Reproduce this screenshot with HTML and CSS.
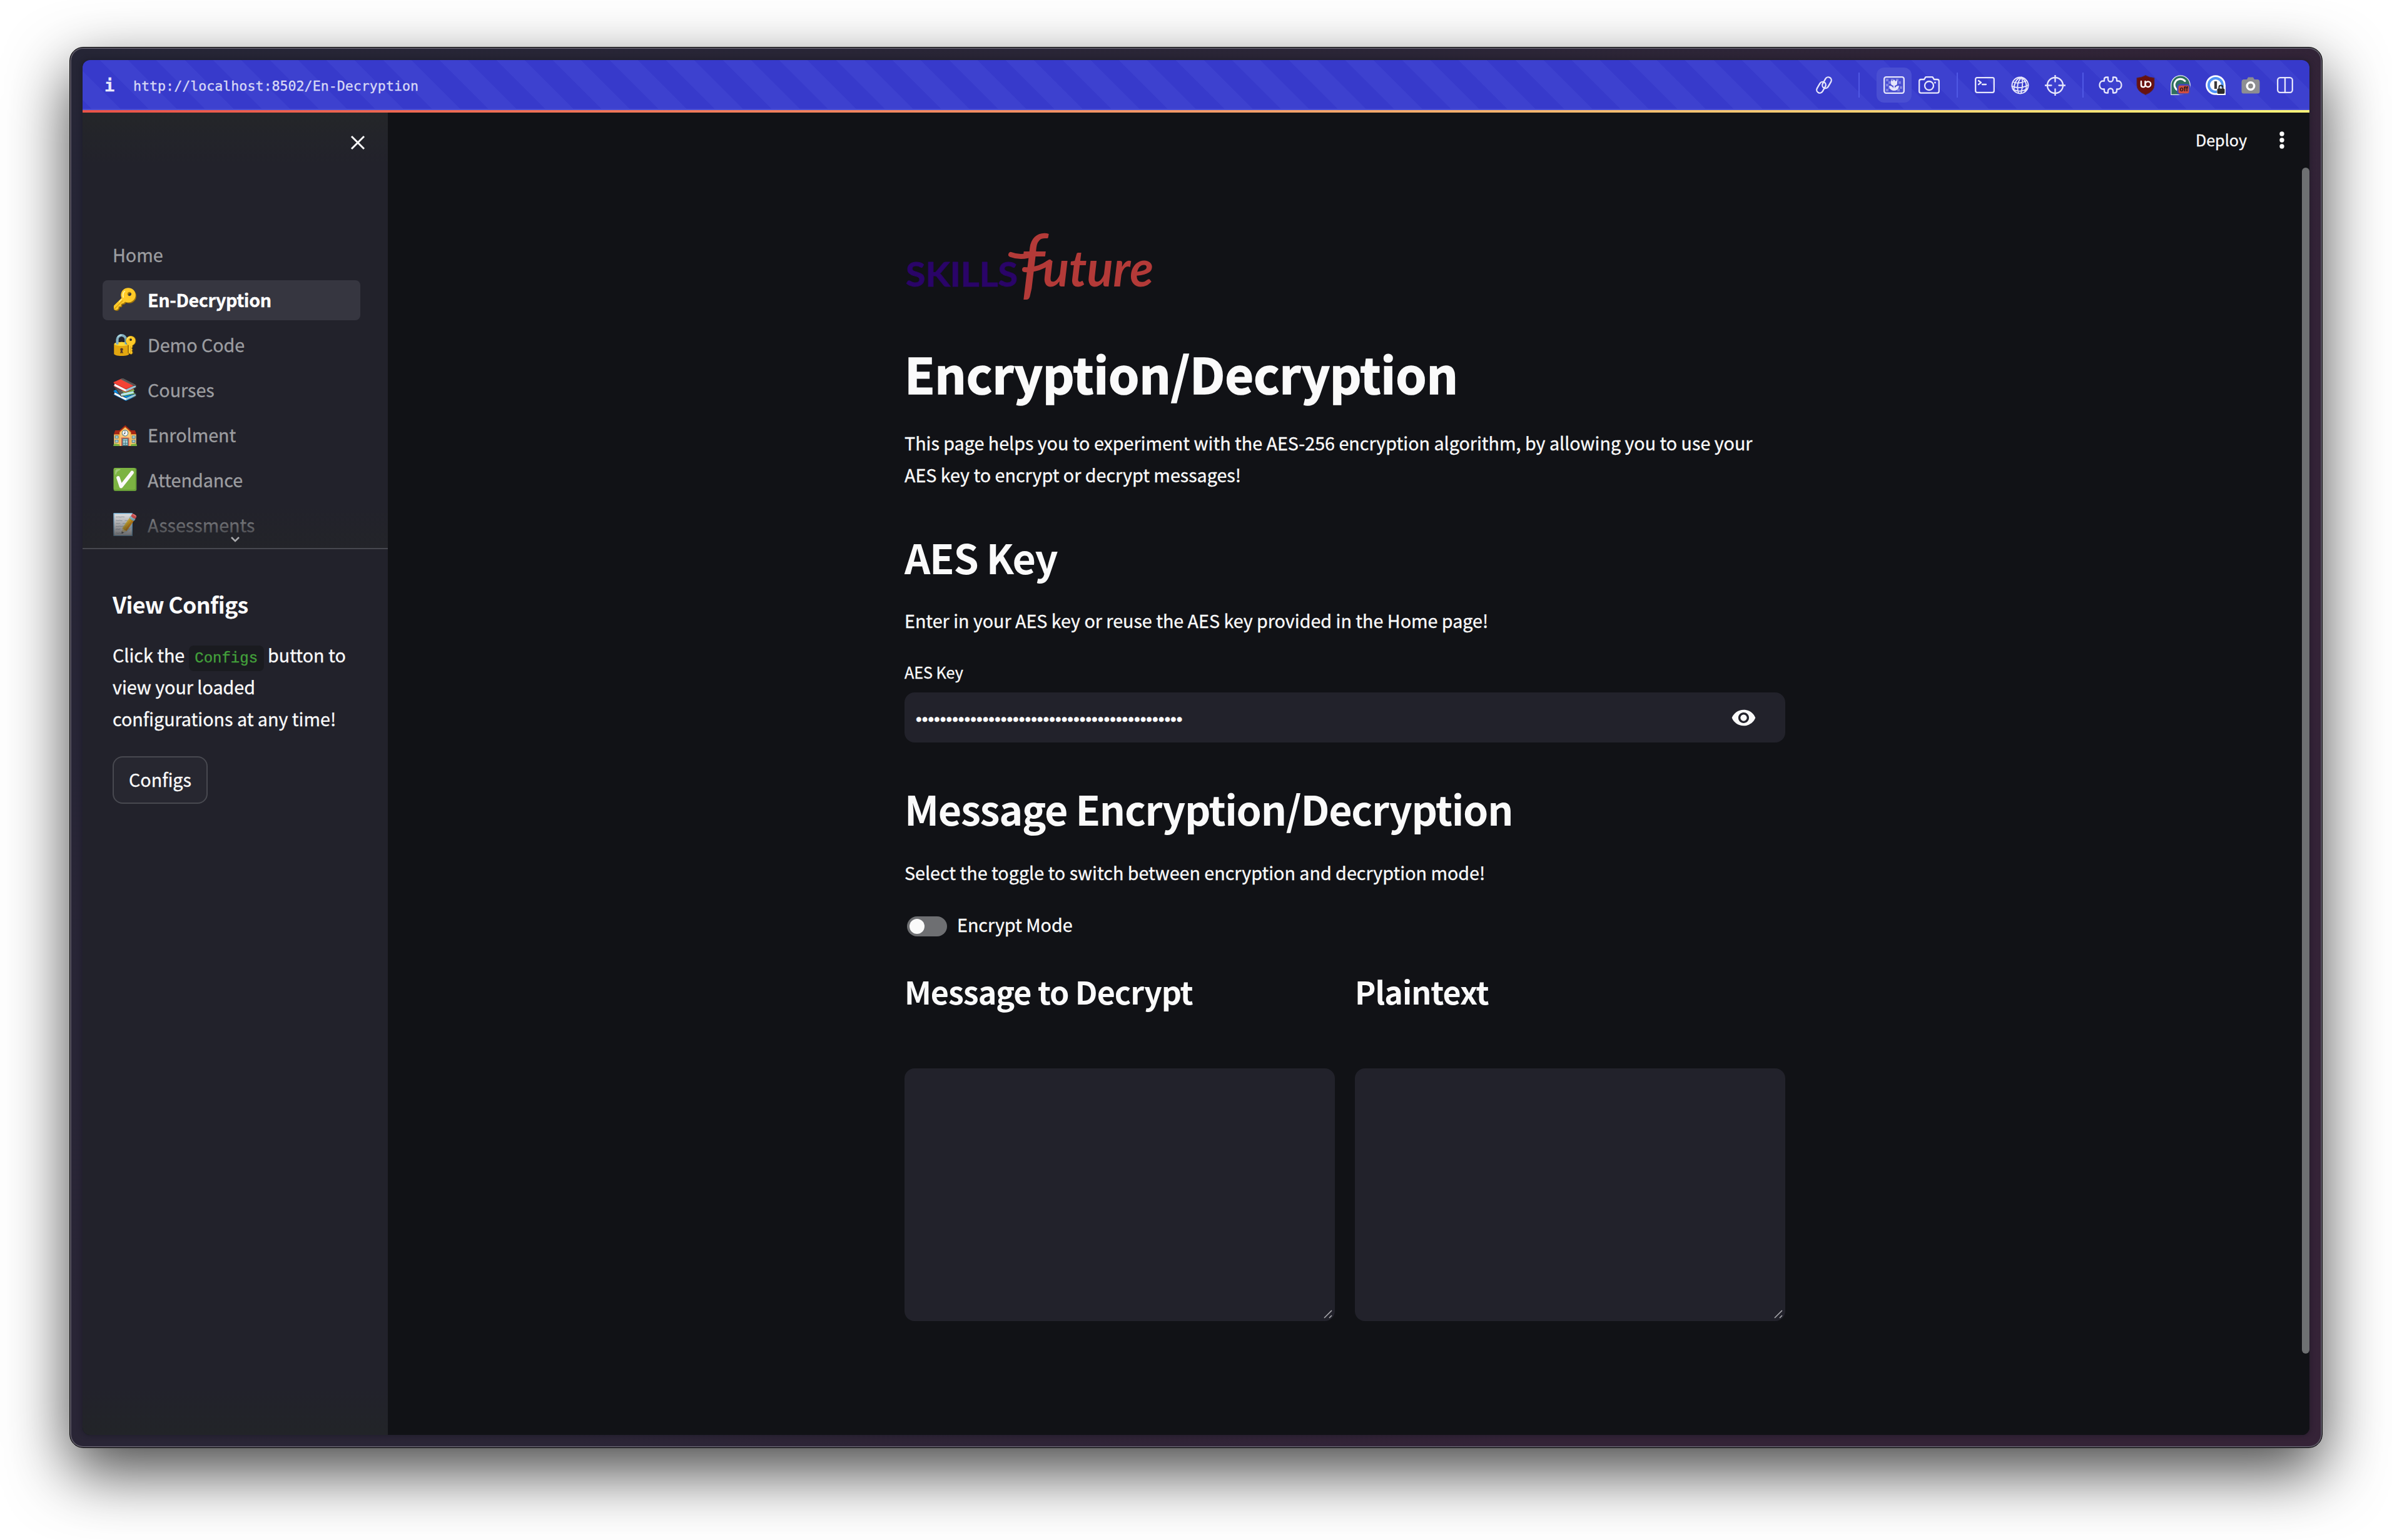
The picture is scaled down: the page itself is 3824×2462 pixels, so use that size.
FILE: index.html
```html
<!DOCTYPE html>
<html lang="en">
<head>
<meta charset="utf-8">
<title>En-Decryption</title>
<link rel="stylesheet" href="styles.css">
</head>
<body>
<div class="window">
  <div class="viewport">
    <header class="toolbar">
      <span class="site-info">i</span>
      <span class="url">http://localhost:8502/En-Decryption</span>
      <div class="tools">
        <svg class="link" width="30" height="32" viewBox="0 0 30 32"><g transform="rotate(30 15 16)"><rect x="12" y="1" width="10" height="19" rx="5"/><rect x="8" y="12" width="10" height="19" rx="5"/></g></svg>
        <i class="sep"></i>
        <span class="tool-active"><svg width="34" height="28" viewBox="0 0 34 28"><g class="checks"><path d="M4 4h4v4H4zM12 4h4v4h-4zM20 4h4v4h-4zM8 8h4v4H8zM24 8h4v4h-4zM4 12h4v4H4zM8 16h4v4H8zM26 16h4v4h-4zM4 20h4v4H4zM22 20h4v4h-4z"/></g><rect x="1.2" y="1.2" width="31.6" height="25.6" rx="3"/><path class="solid" d="M12 6l2.5 2L17 5l2.500 3L22 6v5a5 4 0 0 1-4 4v4q2-4 7-4-1 8-8 8t-8-8q5 0 7 4v-4a5 4 0 0 1-4-4z"/></svg></span>
        <svg class="camera" width="34" height="28" viewBox="0 0 34 28"><path d="M4 5h5l2.500-3.800h11L25 5h5q2.800 0 2.800 2.800v16q0 2.800-2.800 2.800H4q-2.800 0-2.800-2.800v-16Q1.200 5 4 5z"/><circle cx="17" cy="15" r="7"/><circle class="solid" cx="26.500" cy="10" r="1.500"/></svg>
        <i class="sep sep-b"></i>
        <svg class="terminal" width="32" height="26" viewBox="0 0 32 26"><rect x="1.200" y="1.200" width="29.600" height="23.600" rx="2.500"/><path d="M6 6l4 3-4 3M12 12h6"/></svg>
        <svg class="globe" width="29" height="29" viewBox="0 0 29 29"><circle cx="14.500" cy="14.500" r="13"/><path d="M17 1.500Q7 11 12 27M17 1.500Q20 13 16 27M17 1.500Q29 12 22 25M17 1.500Q5 4 4.500 22M3 9Q12 13 25 7M1.500 16Q14 21 27.500 14M5 22Q16 26 26 20"/></svg>
        <svg class="target" width="33" height="33" viewBox="0 0 33 33"><circle cx="16.500" cy="16.500" r="12.500"/><path d="M16.500 0v10.500M16.500 22.500V33M0 16.500h10.500M22.500 16.500H33"/></svg>
        <i class="sep sep-c"></i>
        <svg class="puzzle" width="38" height="28" viewBox="0 0 38 28"><path d="M9 7.500V5q0-3.500 3.500-3.500H15v3a4 4 0 0 0 8 0v-3h2.500Q29 1.500 29 5v2.500h2.500a5 6.500 0 0 1 0 13H29V23q0 3.500-3.500 3.500H23v-3a4 4 0 0 0-8 0v3h-2.500Q9 26.500 9 23v-2.500H6.500a5 6.500 0 0 1 0-13z"/></svg>
        <svg class="ublock" width="30" height="32" viewBox="0 0 30 32"><path d="M15 .5Q21 4 29 4.500V16q0 10-14 15.500Q1 26 1 16V4.500Q9 4 15 .5z" fill="#68120f" stroke="#4c2a55" stroke-width="1"/><path d="M8 10v6q0 3.200 3.300 3.200T14.500 16v-6" fill="none" stroke="#fff" stroke-width="2.400"/><circle cx="19" cy="14.700" r="4.300" fill="none" stroke="#fff" stroke-width="2.400"/></svg>
        <svg class="grammarly" width="32" height="32" viewBox="0 0 32 32"><path d="M.8 31.300V16A15.200 15.200 0 1 1 16 31.300z" fill="#2f6f5f" stroke="#e8eff0" stroke-width="1.300"/><path d="M23 9.500A9.500 9.500 0 1 0 14 25" fill="none" stroke="#fff" stroke-width="3"/><rect x="11.500" y="15.500" width="19" height="15" rx="3.500" fill="#cf4f43" stroke="#4146bf"/><text x="21" y="26.300" text-anchor="middle" class="off">off</text></svg>
        <svg class="onepass" width="32" height="32" viewBox="0 0 32 32"><circle cx="16" cy="16" r="15.800" fill="#fff"/><path d="M16 16h16v16H18z" fill="#fff"/><circle cx="16" cy="16" r="11" fill="none" stroke="#4f93f5" stroke-width="4"/><path d="M18 20h14v12H18z" fill="#fff"/><rect x="14" y="10" width="4.200" height="12" fill="#3a3a3a"/><path d="M21.500 22v-2.500a3 3 0 0 1 6 0V22" fill="none" stroke="#2b2b2b" stroke-width="2"/><rect x="18.500" y="21.500" width="12" height="8.500" rx="2" fill="#2b2b2b"/></svg>
        <svg class="graycam" width="30" height="27" viewBox="0 0 30 27"><path d="M3 4h6l2-3.500h8L21 4h6q2.500 1 2.500 4v15.500q0 3-3 3h-23q-3 0-3-3V8Q.5 5 3 4z" fill="#8d8e92"/><circle cx="15" cy="14.500" r="5.700" fill="#8a8a8a" stroke="#fff" stroke-width="3.600"/></svg>
        <svg class="split" width="26" height="26" viewBox="0 0 26 26"><rect x="1.200" y="1.200" width="23.600" height="23.600" rx="4"/><path d="M13 1v24"/></svg>
      </div>
    </header>
    <div class="accent"></div>
    <div class="app">
      <aside class="sidebar">
        <div class="sidebar-top"><svg class="close" width="26" height="26" viewBox="0 0 26 26"><path d="M3 3l20 20M23 3L3 23"/></svg></div>
        <nav class="nav">
          <a class="item">Home</a>
          <a class="item active"><span class="emoji">🔑</span>En-Decryption</a>
          <a class="item"><span class="emoji">🔐</span>Demo Code</a>
          <a class="item"><span class="emoji">📚</span>Courses</a>
          <a class="item"><span class="emoji">🏫</span>Enrolment</a>
          <a class="item"><span class="emoji">✅</span>Attendance</a>
          <a class="item"><span class="emoji">📝</span>Assessments</a>
          <div class="fade"><svg width="18" height="12" viewBox="0 0 18 12"><path d="M3 2l6 6 6-6"/></svg></div>
        </nav>
        <section class="configs">
          <h4>View Configs</h4>
          <p>Click the <code>Configs</code> button to<br>view your loaded<br>configurations at any time!</p>
          <button>Configs</button>
        </section>
      </aside>
      <main class="main">
        <div class="app-header">
          <span>Deploy</span>
          <svg width="10" height="30" viewBox="0 0 10 30"><circle cx="5" cy="5" r="3.700"/><circle cx="5" cy="15" r="3.700"/><circle cx="5" cy="25" r="3.700"/></svg>
        </div>
        <div class="content">
          <svg class="logo" width="420" height="130" viewBox="0 0 420 130">
            <text class="skills" x="8" y="103" textLength="179" lengthAdjust="spacingAndGlyphs">SKILLS</text>
            <text class="future" x="191" y="108"><tspan class="tall">f</tspan><tspan x="227" y="103" textLength="177" lengthAdjust="spacingAndGlyphs">uture</tspan></text>
            <path d="M176 52q18 7 38-2M198 76q20 2 40-12"/>
          </svg>
          <h1>Encryption/Decryption</h1>
          <p class="intro">This page helps you to experiment with the AES-256 encryption algorithm, by allowing you to use your<br>AES key to encrypt or decrypt messages!</p>
          <h2 class="key-title">AES Key</h2>
          <p class="key-text">Enter in your AES key or reuse the AES key provided in the Home page!</p>
          <label class="key-label">AES Key</label>
          <div class="password">
            <span class="dots">••••••••••••••••••••••••••••••••••••••••••••</span>
            <svg width="41" height="41" viewBox="0 0 24 24"><path d="M12 4.500C7 4.500 2.730 7.610 1 12c1.730 4.390 6 7.500 11 7.500s9.270-3.110 11-7.500c-1.730-4.390-6-7.500-11-7.500zM12 17c-2.760 0-5-2.240-5-5s2.240-5 5-5 5 2.240 5 5-2.240 5-5 5zm0-8c-1.660 0-3 1.340-3 3s1.340 3 3 3 3-1.340 3-3-1.340-3-3-3z"/></svg>
          </div>
          <h2 class="msg-title">Message Encryption/Decryption</h2>
          <p class="msg-text">Select the toggle to switch between encryption and decryption mode!</p>
          <div class="toggle-row"><span class="toggle"><i></i></span><span>Encrypt Mode</span></div>
          <div class="columns">
            <section><h3>Message to Decrypt</h3><div class="area"><svg width="16" height="16" viewBox="0 0 16 16"><path d="M2 14L14 2M10 14l4-4"/></svg></div></section>
            <section><h3>Plaintext</h3><div class="area"><svg width="16" height="16" viewBox="0 0 16 16"><path d="M2 14L14 2M10 14l4-4"/></svg></div></section>
          </div>
        </div>
        <div class="scrollbar"></div>
      </main>
    </div>
  </div>
</div>
</body>
</html>
```
FILE: styles.css
```css
* { box-sizing: border-box; margin: 0; padding: 0; }
html, body { width: 3824px; height: 2462px; overflow: hidden; background: #fff; }
body {
  padding: 75px 0 0 111px;
  font: 400 28.67px/51.2px "Noto Sans CJK SC", "Noto Sans", sans-serif;
  color: #fafafa;
  -webkit-text-stroke: 0.35px currentColor;
}
svg { display: block; flex: none; }
svg text { -webkit-text-stroke: 0; }

.window {
  width: 3602px; height: 2240px;
  padding: 20px;
  border: 1px solid #000;
  border-radius: 22px;
  background: linear-gradient(125deg, #252535 0%, #2b2536 45%, #332337 75%, #352337 100%);
  box-shadow: inset 0 0 0 2px #5b5764, 0 38px 100px rgba(0, 0, 0, .72);
}
.viewport {
  display: flex; flex-direction: column;
  width: 3560px; height: 2198px;
  border-radius: 12px; overflow: hidden;
  background: #111216;
  box-shadow: 0 0 8px rgba(20, 22, 30, .6);
}

.toolbar {
  display: flex; align-items: center;
  flex: none; height: 80px;
  padding: 0 26px 0 35px;
  background: repeating-linear-gradient(45deg, #373acb 0 12px, #3d41cf 12px 44px, #373acb 44px 64px);
  box-shadow: inset 0 -2px 0 #4a4ed4;
}
.site-info { width: 16px; padding-top: 2px; font: 700 27px/40px "DejaVu Sans Mono", monospace; color: #e9e9fb; }
.url { margin-left: 30px; padding-top: 3px; font: 400 21.65px/40px "DejaVu Sans Mono", monospace; color: #d7d8f5; }
.tools { display: flex; align-items: center; margin-left: auto; fill: none; stroke: #e6e6fb; stroke-width: 2.300; stroke-linecap: round; stroke-linejoin: round; }
.tools .solid { fill: #e6e6fb; stroke: none; }
.checks { fill: #8082e0; stroke: none; }
.sep { width: 2px; height: 40px; margin: 0 27px 0 40px; background: #4f58e4; }
.tool-active { display: flex; align-items: center; justify-content: center; width: 56px; height: 56px; border-radius: 12px; background: #494ed2; }
.camera { margin-left: 11px; }
.sep-b { margin-left: 27px; }
.globe { margin-left: 26px; stroke-width: 1.900; }
.target { margin-left: 25px; }
.sep-c { margin-left: 27px; margin-right: 24px; }
.ublock { margin-left: 22px; }
.grammarly, .ublock, .onepass, .graycam { stroke: none; }
.grammarly { margin-left: 25px; }
.onepass { margin-left: 24px; }
.graycam { margin-left: 25px; }
.split { margin-left: 27px; }
.off { font: 700 10.500px "Liberation Sans", sans-serif; fill: #1f1413; }

.accent { flex: none; height: 4px; background: linear-gradient(90deg, #ea5449, #f59a68 50%, #f8c873 75%, #fff578); }

.app { display: flex; flex: 1; }
.sidebar { width: 488px; background: linear-gradient(#242629, #22222b 80px, #22222b 2040px, #222428); }
.sidebar-top { display: flex; justify-content: flex-end; height: 196px; padding: 35px 35px 0 0; }
.close { fill: none; stroke: #fafafa; stroke-width: 3; }
.nav { position: relative; height: 502px; padding: 0 44px 0 32px; border-bottom: 2px solid #47484f; overflow: hidden; }
.item {
  display: flex; align-items: center;
  height: 64px; margin-bottom: 8px; padding: 0 16px 3px;
  border-radius: 8px;
  color: #9c9da0;
}
.item.active { background: #363640; color: #fff; font-weight: 700; letter-spacing: -.4px; }
.emoji { display: flex; justify-content: center; width: 40px; margin-right: 16px; font: 33.5px/40px "Noto Color Emoji", sans-serif; letter-spacing: 0; -webkit-text-stroke: 0; }
.fade {
  position: absolute; left: 0; right: 0; bottom: 0;
  display: flex; justify-content: center; align-items: flex-end;
  height: 64px; padding-bottom: 7px;
  background: linear-gradient(rgba(35, 36, 41, 0), #232429);
}
.fade svg { fill: none; stroke: #a9aaad; stroke-width: 2.600; }
.configs { padding: 63px 0 0 48px; }
h4 { font-size: 35.840px; line-height: 48px; letter-spacing: -.7px; }
.configs p { margin-top: 32px; }
code {
  padding: 7px 9.600px; border-radius: 8px;
  background: #1a1b20; color: #43a03b;
  font: 24px/24px "Liberation Mono", monospace;
}
button {
  display: block; width: 152px; height: 76px; margin-top: 34px; padding-bottom: 3px;
  border: 2px solid #484950; border-radius: 16px;
  background: #272730; color: inherit; font: inherit;
  -webkit-text-stroke: inherit;
}

.main { position: relative; flex: 1; background: #111216; }
.app-header { display: flex; align-items: center; justify-content: flex-end; height: 88px; padding: 0 39px 0 0; font-size: 25.100px; }
.app-header svg { margin-left: 51px; fill: #fafafa; }
.content { width: 1408px; margin-left: 826px; }
.logo { margin: 87px 0 58px -6px; overflow: visible; filter: blur(.7px); }
.skills { font: 700 53px Lato, sans-serif; fill: #2a0468; stroke: #2a0468; stroke-width: 1; stroke-linejoin: round; }
.future { font: italic 700 80px Lato, sans-serif; fill: #b33a38; }
.tall { font-size: 124px; font-weight: 400; }
.logo path { fill: none; stroke: #b33a38; stroke-width: 8; stroke-linecap: round; }
h1 { font-size: 78.900px; line-height: 105.600px; letter-spacing: -.15px; }
h2 { font-size: 64.500px; line-height: 86.400px; letter-spacing: -1.300px; }
h3 { font-size: 50.200px; line-height: 67.200px; letter-spacing: -1px; }
h1, h2, h3, h4 { font-weight: 700; -webkit-text-stroke: 0; }
h1 { -webkit-text-stroke: 1.6px currentColor; }
.intro { margin-top: 33px; }
.key-title { margin-top: 63px; }
.key-text { margin-top: 33px; }
.key-label { display: block; margin-top: 34px; font-size: 25.100px; line-height: 44.800px; }
.password {
  display: flex; align-items: center; justify-content: space-between;
  height: 80px; margin-top: 11px; padding: 0 46px 0 18px;
  border-radius: 16px; background: #22222b;
}
.password svg { fill: #fafafa; }
.dots { padding-top: 5px; font: 27.700px/40px "Liberation Sans", sans-serif; }
.msg-title { margin-top: 62px; }
.msg-text { margin-top: 33px; }
.toggle-row { display: flex; align-items: center; gap: 16px; margin-top: 32px; padding-left: 4px; }
.toggle { width: 64px; height: 32px; margin-top: 6px; padding: 4px; border-radius: 16px; background: #6e6f72; }
.toggle i { display: block; width: 24px; height: 24px; border-radius: 50%; background: #fafafa; }
.columns { display: grid; grid-template-columns: 688px 688px; gap: 32px; margin-top: 48px; }
.area { display: flex; align-items: flex-end; justify-content: flex-end; height: 404px; margin-top: 90px; padding: 3px; border-radius: 16px; background: #22222b; }
.area svg { fill: none; stroke: #a9a9ad; stroke-width: 1.600; }
.scrollbar { position: absolute; right: 0; top: 88px; width: 12px; height: 1896px; border-radius: 6px; background: #6e7072; }
```
